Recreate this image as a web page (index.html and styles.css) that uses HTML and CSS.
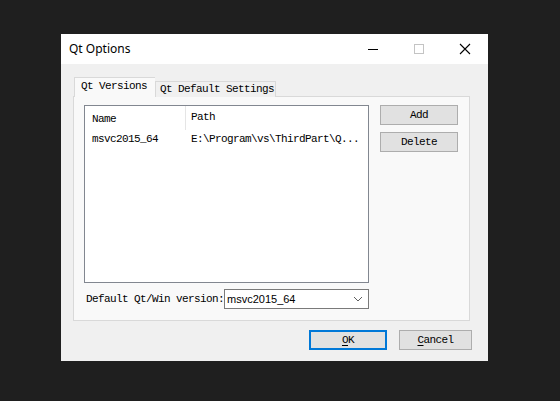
FILE: index.html
```html
<!DOCTYPE html>
<html>
<head>
<meta charset="utf-8">
<link rel="stylesheet" href="styles.css">
</head>
<body>
<div class="window">
  <div class="titlebar">
    <div class="title">Qt Options</div>
    <div class="ctrl">
      <svg width="12" height="12" viewBox="0 0 12 12"><line x1="1" y1="6.5" x2="11" y2="6.5" stroke="#000" stroke-width="1"/></svg>
    </div>
    <div class="ctrl">
      <svg width="12" height="12" viewBox="0 0 12 12"><rect x="1.5" y="1.5" width="9" height="9" fill="none" stroke="#c4c4c4" stroke-width="1"/></svg>
    </div>
    <div class="ctrl">
      <svg width="12" height="12" viewBox="0 0 12 12"><path d="M1 1 L11 11 M11 1 L1 11" stroke="#000" stroke-width="1.1" fill="none"/></svg>
    </div>
  </div>
  <div class="content">
    <div class="tabs">
      <div class="tab active">Qt Versions</div>
      <div class="tab">Qt Default Settings</div>
    </div>
    <div class="pane">
      <div class="top-row">
        <div class="list">
          <div class="list-head">
            <div class="col-name">Name</div>
            <div class="col-path head-path">Path</div>
          </div>
          <div class="list-row">
            <div class="col-name">msvc2015_64</div>
            <div class="col-path">E:\Program\vs\ThirdPart\Q...</div>
          </div>
        </div>
        <div class="side">
          <div class="btn">Add</div>
          <div class="btn">Delete</div>
        </div>
      </div>
      <div class="version-row">
        <div class="label">Default Qt/Win version:</div>
        <div class="combo">
          <span class="combo-text">msvc2015_64</span>
          <svg width="10" height="6" viewBox="0 0 10 6"><path d="M1 1 L5 5 L9 1" stroke="#606060" stroke-width="1" fill="none"/></svg>
        </div>
      </div>
    </div>
    <div class="footer">
      <div class="btn default"><u>O</u>K</div>
      <div class="btn cancel"><u>C</u>ancel</div>
    </div>
  </div>
</div>
</body>
</html>
```

FILE: styles.css
```css
* { box-sizing: border-box; }
html, body { margin: 0; }
body {
  background: #1f1f1f;
  padding: 34px 0 0 61px;
  height: 401px;
  overflow: hidden;
  font-family: "Liberation Mono", monospace;
  font-size: 11px;
  letter-spacing: -0.6px;
  color: #000;
}
.window {
  width: 427px;
  height: 327px;
  display: flex;
  flex-direction: column;
  background: #f0f0f0;
}
.titlebar {
  height: 30px;
  background: #fff;
  display: flex;
  align-items: center;
}
.title {
  flex: 1;
  padding-left: 8px;
  font-family: "Noto Sans", sans-serif;
  font-size: 12px;
  letter-spacing: 0;
  color: #000;
  padding-bottom: 1px;
}
.ctrl {
  width: 46px;
  height: 30px;
  display: flex;
  align-items: center;
  justify-content: center;
}
.content {
  flex: 1;
  padding: 13px 19px 0 12px;
  display: flex;
  flex-direction: column;
}
.tabs {
  display: flex;
  align-items: flex-end;
  height: 20px;
  margin-left: 1px;
  margin-bottom: -1px;
  position: relative;
  z-index: 1;
}
.tab {
  height: 16px;
  width: 121px;
  border: 1px solid #d9d9d9;
  border-bottom: none;
  background: #f0f0f0;
  padding-left: 4px;
  line-height: 15px;
  white-space: nowrap;
}
.tab.active {
  width: 81px;
  height: 20px;
  background: #f9f9f9;
  padding-left: 6px;
  line-height: 16px;
  border-right: none;
}
.pane {
  width: 397px;
  height: 225px;
  border: 1px solid #d9d9d9;
  background: #f9f9f9;
  padding: 8px 10px 0 10px;
  display: flex;
  flex-direction: column;
}
.top-row {
  display: flex;
  align-items: flex-start;
}
.list {
  width: 285px;
  height: 178px;
  border: 1px solid #828790;
  background: #fff;
}
.list-head, .list-row {
  display: flex;
  white-space: nowrap;
}
.list-head {
  height: 24px;
  align-items: center;
  padding-top: 2px;
}
.list-row {
  height: 18px;
  align-items: center;
}
.col-name {
  width: 100px;
  padding-left: 7px;
}
.col-path {
  padding-left: 6px;
}
.head-path {
  border-left: 1px solid #e5e5e5;
  height: 24px;
  line-height: 22px;
  margin-top: -2px;
  padding-left: 5px;
}
.side {
  margin-left: 11px;
  display: flex;
  flex-direction: column;
  gap: 7px;
}
.btn {
  width: 78px;
  height: 20px;
  border: 1px solid #adadad;
  background: #e1e1e1;
  display: flex;
  align-items: center;
  justify-content: center;
  padding-bottom: 1px;
}
.version-row {
  display: flex;
  align-items: center;
  margin-top: 6px;
}
.label {
  width: 140px;
  padding-left: 2px;
  white-space: nowrap;
}
.combo {
  width: 145px;
  height: 20px;
  border: 1px solid #7a7a7a;
  background: #fff;
  display: flex;
  align-items: center;
  justify-content: space-between;
  padding: 0 5px 0 2px;
}
.combo-text {
  font-family: "Liberation Sans", sans-serif;
  font-size: 11px;
  letter-spacing: 0;
}
.footer {
  display: flex;
  justify-content: flex-end;
  gap: 12px;
  padding-top: 9px;
  padding-right: 16px;
  margin-right: -19px;
}
.btn.default {
  width: 78px;
  border: 2px solid #0078d7;
}
.btn.cancel {
  width: 73px;
}
u { text-decoration: underline; text-underline-offset: 2px; }
```
